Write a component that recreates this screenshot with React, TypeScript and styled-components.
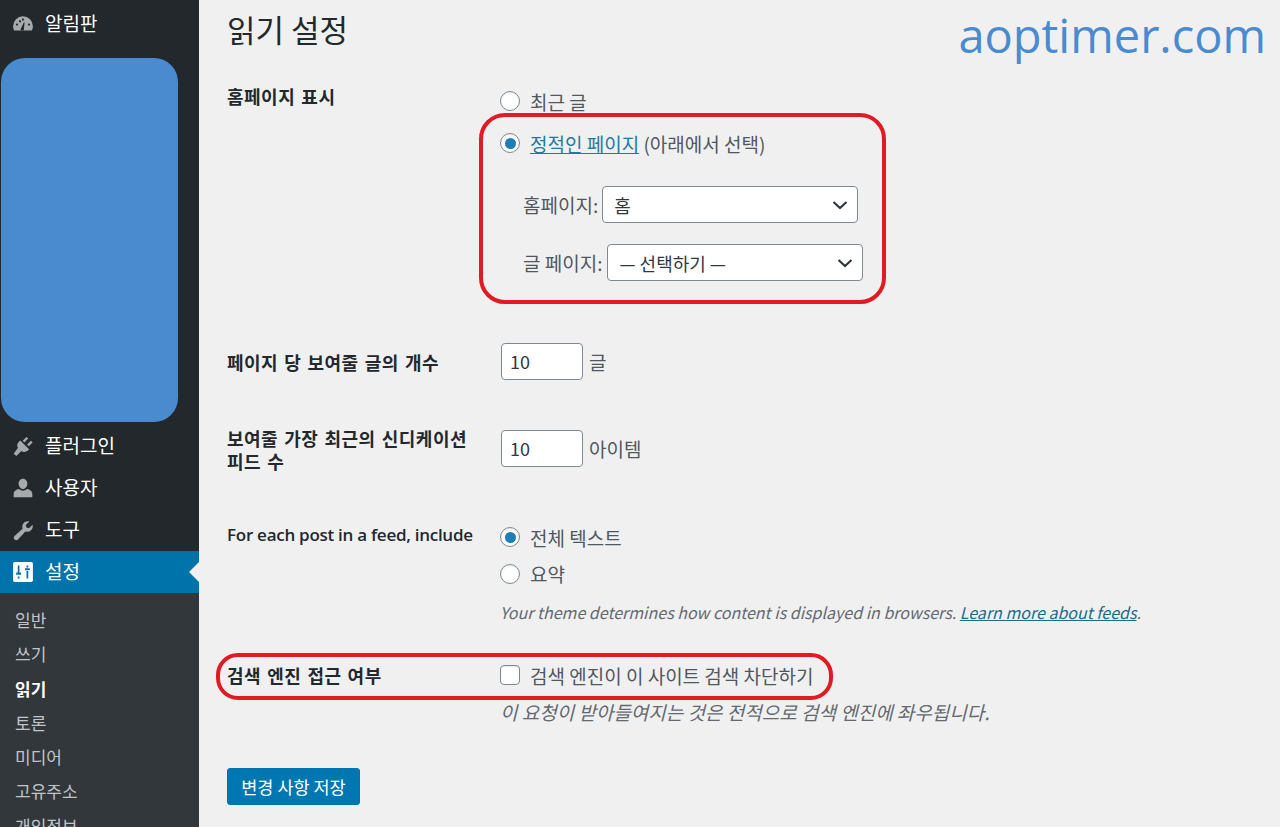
import React from "react";
import styled, { createGlobalStyle } from "styled-components";

const GlobalStyle = createGlobalStyle`
  html, body {
    margin: 0;
    height: 100%;
    overflow: hidden;
    background: #f0f0f1;
  }
  body {
    font-family: "Noto Sans CJK KR", "Open Sans", sans-serif;
    color: #3c434a;
  }
  * { box-sizing: border-box; }
`;

const Page = styled.div`
  display: grid;
  grid-template-columns: 199px 1fr;
  height: 827px;
  overflow: hidden;
`;

const Sidebar = styled.aside`
  background: #23282d;
  height: 827px;
  overflow: hidden;
  padding-top: 3px;
`;

const MenuItem = styled.div<{ $active?: boolean }>`
  position: relative;
  display: flex;
  align-items: center;
  gap: 11px;
  height: 42px;
  padding-left: 12px;
  font-size: 19px;
  color: #fff;
  background: ${({ $active }) => ($active ? "#0073aa" : "transparent")};
  svg { width: 22px; height: 22px; flex: none; }
`;

const MenuLabel = styled.span`
  margin-bottom: 3px;
`;

const ActiveArrow = styled.span`
  position: absolute;
  right: 0;
  top: 11px;
  border: 10px solid transparent;
  border-left-width: 0;
  border-right-color: #f0f0f1;
`;

const HiddenMenuBlock = styled.div`
  width: 177px;
  height: 364px;
  margin: 13px 0 3px 1px;
  background: #4a8bd0;
  border-radius: 24px;
`;

const SubMenu = styled.div`
  background: #32373c;
  padding-top: 10px;
`;

const SubItem = styled.div<{ $current?: boolean }>`
  height: 34.3px;
  line-height: 34px;
  padding-left: 15px;
  font-size: 17px;
  color: ${({ $current }) => ($current ? "#fff" : "#c3c4c7")};
  font-weight: ${({ $current }) => ($current ? 700 : 400)};
`;

const Main = styled.main`
  position: relative;
  padding: 7px 0 0 28px;
`;

const Watermark = styled.div`
  position: absolute;
  top: 5px;
  right: 14px;
  font-family: "Open Sans", sans-serif;
  font-size: 47px;
  line-height: 60px;
  color: #4a8bd0;
`;

const Title = styled.h1`
  margin: 0;
  font-size: 31px;
  line-height: 43px;
  font-weight: 400;
  color: #23282d;
`;

const FormRow = styled.section<{ $height: number }>`
  display: grid;
  grid-template-columns: 273px 1fr;
  height: ${({ $height }) => $height}px;
`;

const RowLabel = styled.div<{ $top: number }>`
  margin-top: ${({ $top }) => $top}px;
  width: 250px;
  font-size: 18px;
  line-height: 23px;
  font-weight: 700;
  letter-spacing: 0.5px;
  word-spacing: 1.5px;
  word-break: keep-all;
  color: #23282d;
`;

const LatinRowLabel = styled.div<{ $top: number }>`
  margin-top: ${({ $top }) => $top}px;
  font-family: "Open Sans", sans-serif;
  font-size: 17px;
  line-height: 23px;
  font-weight: 600;
  letter-spacing: -0.27px;
  white-space: nowrap;
  color: #23282d;
`;

const Field = styled.div<{ $top: number }>`
  padding-top: ${({ $top }) => $top}px;
  font-size: 19px;
  color: #50575e;
`;

const OptionLine = styled.label<{ $height: number }>`
  display: flex;
  align-items: center;
  gap: 10px;
  height: ${({ $height }) => $height}px;
`;

const Radio = styled.span<{ $checked?: boolean }>`
  position: relative;
  width: 20px;
  height: 20px;
  border-radius: 50%;
  border: 1px solid #7e8993;
  background: #fff;
  box-shadow: inset 0 1px 2px rgba(0, 0, 0, 0.1);
  flex: none;
  &::after {
    content: "";
    display: ${({ $checked }) => ($checked ? "block" : "none")};
    position: absolute;
    inset: 3.5px;
    border-radius: 50%;
    background: #1e7fb5;
  }
`;

const CheckBox = styled.span`
  width: 20px;
  height: 20px;
  border-radius: 4px;
  border: 1px solid #7e8993;
  background: #fff;
  box-shadow: inset 0 1px 2px rgba(0, 0, 0, 0.1);
  flex: none;
`;

const PageLink = styled.a`
  color: #1f7a9e;
  text-decoration: underline;
`;

const SelectRow = styled.div<{ $top: number; $gap: number }>`
  display: flex;
  align-items: center;
  gap: ${({ $gap }) => $gap}px;
  height: 37px;
  margin: ${({ $top }) => $top}px 0 0 23px;
`;

const SelectBox = styled.div`
  display: flex;
  align-items: center;
  justify-content: space-between;
  width: 256px;
  height: 37px;
  padding: 0 8px 0 11px;
  background: #fff;
  border: 1px solid #7e8993;
  border-radius: 4px;
  font-size: 18px;
  color: #32373c;
  svg { width: 18px; height: 18px; }
`;

const NumberRow = styled.div`
  display: flex;
  align-items: center;
  gap: 6px;
  margin-left: 1px;
`;

const NumberBox = styled.div`
  width: 82px;
  height: 37px;
  line-height: 35px;
  padding-left: 8px;
  background: #fff;
  border: 1px solid #7e8993;
  border-radius: 4px;
  font-size: 18px;
  color: #32373c;
`;

const Hint = styled.p<{ $top: number; $size: number }>`
  margin: ${({ $top }) => $top}px 0 0;
  font-size: ${({ $size }) => $size}px;
  font-style: italic;
  white-space: nowrap;
  color: #646970;
`;

const HintLink = styled.a`
  color: #1c6a8c;
  text-decoration: underline;
`;

const SaveButton = styled.button`
  display: block;
  width: 133px;
  height: 37px;
  padding: 0;
  border: 1px solid #0073aa;
  border-radius: 3px;
  background: #0077b0;
  color: #fff;
  font-family: inherit;
  font-size: 17.5px;
`;

const Callout = styled.div<{ $left: number; $top: number; $width: number; $height: number; $radius: number }>`
  position: absolute;
  left: ${({ $left }) => $left}px;
  top: ${({ $top }) => $top}px;
  width: ${({ $width }) => $width}px;
  height: ${({ $height }) => $height}px;
  border: 4px solid #e01b24;
  border-radius: ${({ $radius }) => $radius}px;
  pointer-events: none;
`;

const Chevron = () => (
  <svg viewBox="0 0 18 18" fill="none" stroke="#32373c" strokeWidth="2.2">
    <path d="M2.500 6 L9 12 L15.500 6" />
  </svg>
);

export default function App() {
  return (
    <>
      <GlobalStyle />
      <Page>
        <Sidebar>
          <MenuItem>
            <svg viewBox="0 0 20 20" fill="#a7aaad">
              <path d="M10 3a9 9 0 0 0-9 9c0 1.500.4 2.900 1 4h16c.6-1.100 1-2.500 1-4a9 9 0 0 0-9-9zm0 2a1 1 0 1 1 0 2 1 1 0 0 1 0-2zM4.500 11.500a1 1 0 1 1 0-2 1 1 0 0 1 0 2zm1.800-4a1 1 0 1 1 0 .1zM10.800 14.500a1.500 1.500 0 1 1-2.300-1l2.300-5 .6.200-.6 5.800zm4.700-3a1 1 0 1 1 0-2 1 1 0 0 1 0 2z" />
            </svg>
            <MenuLabel>알림판</MenuLabel>
          </MenuItem>
          <HiddenMenuBlock />
          <MenuItem>
            <svg viewBox="0 0 20 20" fill="#a7aaad">
              <path d="M7.500 5 L15.500 13 C13.500 15.500 10.500 16 8.500 14.500 L4 19 L1.500 17 L5.500 11.500 C4 9.500 5 7 7.500 5z" />
              <path d="M10.500 6 L14 2.500M14.500 9.500 L18 6" stroke="#a7aaad" strokeWidth="2.200" />
            </svg>
            <MenuLabel>플러그인</MenuLabel>
          </MenuItem>
          <MenuItem>
            <svg viewBox="0 0 20 20" fill="#a7aaad">
              <path d="M10 1.500c2.300 0 4 2 4 4.500s-1.700 5-4 5-4-2.500-4-5 1.700-4.500 4-4.500zM6.500 11c1 1 2.200 1.500 3.500 1.500s2.500-.5 3.500-1.500c3 .5 5 2 5 4.500v3h-17v-3c0-2.500 2-4 5-4.500z" />
            </svg>
            <MenuLabel>사용자</MenuLabel>
          </MenuItem>
          <MenuItem>
            <svg viewBox="0 0 20 20" fill="#a7aaad">
              <path d="M18.700 5.200c.5 2-.1 4-1.600 5.300-1.400 1.200-3.300 1.500-5 .9L5.500 18.600c-.9.900-2.300.9-3.200 0s-.9-2.300 0-3.200l7.300-6.600c-.6-1.700-.3-3.600.9-5C11.800 2.300 13.800 1.700 15.800 2.200L12.500 5.500l.6 2.300 2.300.6 3.300-3.200z" />
            </svg>
            <MenuLabel>도구</MenuLabel>
          </MenuItem>
          <MenuItem $active>
            <svg viewBox="0 0 20 20">
              <rect x="1" y="1" width="18" height="18" rx="1.500" fill="#fff" />
              <path d="M6 4v7M6 14v2M14 4v2M14 9v7" stroke="#0073aa" strokeWidth="1.600" />
              <path d="M3.800 11.500h4.400M11.800 7.500h4.400" stroke="#0073aa" strokeWidth="2" />
            </svg>
            <MenuLabel>설정</MenuLabel>
            <ActiveArrow />
          </MenuItem>
          <SubMenu>
            <SubItem>일반</SubItem>
            <SubItem>쓰기</SubItem>
            <SubItem $current>읽기</SubItem>
            <SubItem>토론</SubItem>
            <SubItem>미디어</SubItem>
            <SubItem>고유주소</SubItem>
            <SubItem>개인정보</SubItem>
          </SubMenu>
        </Sidebar>
        <Main>
          <Watermark>aoptimer.com</Watermark>
          <Title>읽기 설정</Title>
          <FormRow $height={251}>
            <RowLabel $top={35}>홈페이지 표시</RowLabel>
            <Field $top={30}>
              <OptionLine $height={42}>
                <Radio />
                최근 글
              </OptionLine>
              <OptionLine $height={42}>
                <Radio $checked />
                <span>
                  <PageLink>정적인 페이지</PageLink> (아래에서 선택)
                </span>
              </OptionLine>
              <SelectRow $top={22} $gap={4}>
                홈페이지:
                <SelectBox>
                  홈
                  <Chevron />
                </SelectBox>
              </SelectRow>
              <SelectRow $top={21} $gap={5}>
                글 페이지:
                <SelectBox>
                  — 선택하기 —
                  <Chevron />
                </SelectBox>
              </SelectRow>
            </Field>
          </FormRow>
          <FormRow $height={87}>
            <RowLabel $top={50}>페이지 당 보여줄 글의 개수</RowLabel>
            <Field $top={42}>
              <NumberRow>
                <NumberBox>10</NumberBox>글
              </NumberRow>
            </Field>
          </FormRow>
          <FormRow $height={87}>
            <RowLabel $top={39}>보여줄 가장 최근의 신디케이션 피드 수</RowLabel>
            <Field $top={42}>
              <NumberRow>
                <NumberBox>10</NumberBox>아이템
              </NumberRow>
            </Field>
          </FormRow>
          <FormRow $height={160}>
            <LatinRowLabel $top={48}>For each post in a feed, include</LatinRowLabel>
            <Field $top={44}>
              <OptionLine $height={36}>
                <Radio $checked />
                전체 텍스트
              </OptionLine>
              <OptionLine $height={37}>
                <Radio />
                요약
              </OptionLine>
              <Hint $top={8} $size={16}>
                Your theme determines how content is displayed in browsers. <HintLink>Learn more about feeds</HintLink>.
              </Hint>
            </Field>
          </FormRow>
          <FormRow $height={133}>
            <RowLabel $top={29}>검색 엔진 접근 여부</RowLabel>
            <Field $top={26}>
              <OptionLine $height={28}>
                <CheckBox />
                검색 엔진이 이 사이트 검색 차단하기
              </OptionLine>
              <Hint $top={9} $size={19}>이 요청이 받아들여지는 것은 전적으로 검색 엔진에 좌우됩니다.</Hint>
            </Field>
          </FormRow>
          <SaveButton>변경 사항 저장</SaveButton>
          <Callout $left={280} $top={113} $width={407} $height={191} $radius={26} />
          <Callout $left={17} $top={653} $width={617} $height={47} $radius={22} />
        </Main>
      </Page>
    </>
  );
}
